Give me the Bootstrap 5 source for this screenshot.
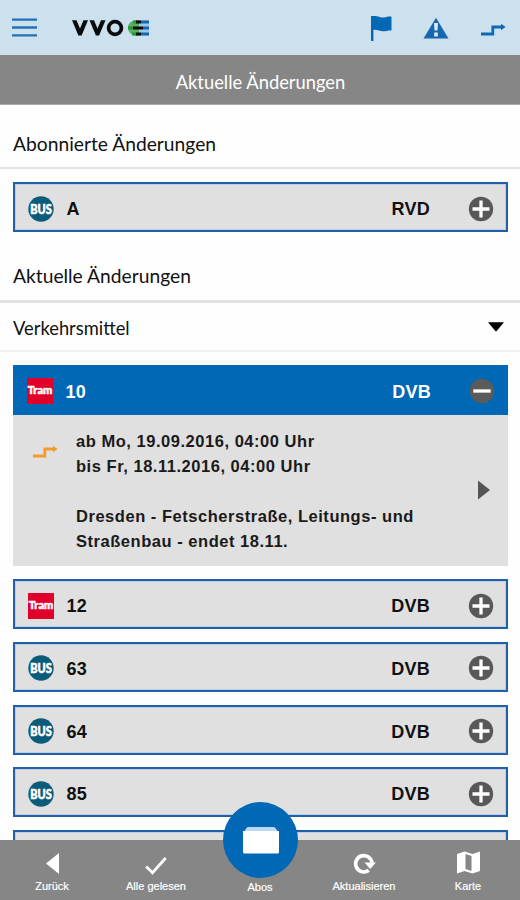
<!DOCTYPE html>
<html lang="de">
<head>
<meta charset="utf-8">
<meta name="viewport" content="width=device-width, initial-scale=1">
<title>Aktuelle Änderungen</title>
<link href="https://cdn.jsdelivr.net/npm/bootstrap@5.3.0/dist/css/bootstrap.min.css" rel="stylesheet">
<style>
  body { height: 900px; font-family: "Liberation Sans", Arial, sans-serif; color: #111; background: #fefefe; }
  svg { display: block; flex: none; }
  .screen { height: 900px; }
  .topbar { height: 55px; background: #cce0ee; padding: 0 14px 0 12px; }
  .brand-logo { margin-left: 35px; }
  .top-icons { gap: 31px; }
  .title-strip { height: 50px; background: #868686; color: #fff; border-bottom: 1px solid #a9a9a9; padding-top: 2px; }
  .futura { font-family: Lato, "Open Sans", sans-serif; font-size: 20px; line-height: 24px; white-space: nowrap; }
  .squeeze { display: inline-block; transform: scaleX(.962); transform-origin: left; }
  .squeeze-more { transform: scaleX(.917); }
  .title-strip .squeeze { transform-origin: center; }
  .section-head { padding: 0 13px; border-bottom: 2px solid #e2e2e2; }
  .head-subscribed { height: 64px; padding-top: 14px; }
  .head-current { height: 71px; padding-top: 17px; border-bottom-width: 3px; }
  .head-filter { height: 49px; padding-right: 16px; padding-top: 1px; border-color: #f0f0f0; }
  .content-scroll { height: 736px; }
  .line-list { padding: 13px 12px 0 13px; }
  .line-row { height: 50px; background: #e0e0e0; border: 2px solid #225fa9; padding: 3px 12px 0 13px; font-size: 18px; font-weight: 700; letter-spacing: .25px; margin-bottom: 12.8px; box-shadow: inset 0 0 0 1px #bdcfe3; flex: none; }
  .line-row span { padding-top: 2px; }
  .line-row .num { margin-left: 12.5px; }
  .line-row .operator { margin-right: 38px; }
  .line-open { background: #0068b4; color: #fff; border-color: #0068b4; box-shadow: none; margin-bottom: 0; padding: 2px 11px 0 12px; }
  .details { height: 151px; background: #e0e0e0; margin-bottom: 13px; padding: 14px 18px 0 19px; font-size: 16.5px; line-height: 25.1px; font-weight: 700; letter-spacing: .53px; white-space: nowrap; color: #1a1a1a; }
  .details .msg { margin-left: 18px; }
  .more-arrow { margin-top: 51px; }
  .bottombar { height: 60px; background: #868686; color: #fff; font-size: 11px; line-height: 13px; }
  .bottombar .tab { flex: 1 1 0; height: 60px; padding-bottom: 7px; -webkit-text-stroke: .2px #fff; }
  .bottombar svg { margin-bottom: 6px; }
  .tab-center { position: relative; }
  .bottombar .tab-center { padding-bottom: 6px; }
  .abo-button { position: absolute; top: -38px; left: 50%; margin-left: -37px; width: 75px; height: 76px; background: #0068b4; }
  .bottombar .abo-button svg { margin: 0; }
</style>
<script src="https://cdn.jsdelivr.net/npm/bootstrap@5.3.0/dist/js/bootstrap.bundle.min.js"></script>
</head>
<body class="overflow-hidden">
<svg width="0" height="0" class="position-absolute">
  <defs>
    <symbol id="bus" viewBox="0 0 26 26"><circle cx="13" cy="13" r="12.7" fill="#0b5c7a"/><text x="13" y="17.6" text-anchor="middle" textLength="21.5" lengthAdjust="spacingAndGlyphs" font-family="Lato, sans-serif" font-weight="900" font-size="13" letter-spacing="0" fill="#fff" stroke="#fff" stroke-width=".6">BUS</text></symbol>
    <symbol id="tram" viewBox="0 0 26 26"><rect width="26" height="26" fill="#e00029"/><text x="13" y="16.3" text-anchor="middle" textLength="24.5" lengthAdjust="spacingAndGlyphs" font-family="Lato, sans-serif" font-weight="900" font-size="11.5" letter-spacing="0" fill="#fff" stroke="#fff" stroke-width=".5">Tram</text></symbol>
    <symbol id="plus" viewBox="0 0 26 26"><circle cx="13" cy="13" r="12.2" fill="#585858"/><path d="M13 4.500v17M4.500 13h17" stroke="#fff" stroke-width="3.300"/></symbol>
    <symbol id="minus" viewBox="0 0 26 26"><circle cx="13" cy="13" r="12.200" fill="#5b5b5b"/><path d="M4.300 13h17.400" stroke="#fff" stroke-width="3.300"/></symbol>
    <symbol id="detour" viewBox="0 0 26 14"><path d="M1 11H12.800V4H22" fill="none" stroke="currentColor" stroke-width="2.800"/><path d="M21 .7L25.600 4L21 7.300z" fill="currentColor"/></symbol>
  </defs>
</svg>
<div class="screen d-flex flex-column overflow-hidden">
  <header class="topbar d-flex align-items-center flex-shrink-0">
    <svg width="25" height="19" viewBox="0 0 25 19"><path d="M0 1.700h25M0 9.500h25M0 17.300h25" stroke="#2370b8" stroke-width="2.300"/></svg>
    <svg class="brand-logo" width="78" height="20" viewBox="0 0 78 20">
      <path d="M0 2.300H4.500L8 10.500L11.500 2.300H16L9.600 17.500H6.400zM17.500 2.300H22L25.500 10.500L29 2.300H33.500L27.100 17.500H23.900z" fill="#080b0c"/>
      <circle cx="43" cy="10" r="6.400" fill="none" stroke="#080b0c" stroke-width="3.700"/>
      <path d="M69 2.300H62Q55.500 5 56 10Q56.500 15.500 62 17.500H69z" fill="#5cae60"/>
      <path d="M67 2.300H77V17.500H67z" fill="#9fc6e4"/>
      <path d="M61 4H66M56 10H62M60 16H66" stroke="#239a32" stroke-width="3"/>
      <path d="M64 4h5M61 10H71M64 16h5" stroke="#080b0c" stroke-width="3"/>
      <path d="M69 4h8M71 10h6M69 16h8" stroke="#1266b2" stroke-width="3"/>
    </svg>
    <div class="top-icons d-flex align-items-center ms-auto">
      <svg width="22" height="26" viewBox="0 0 22 26"><path d="M1 1H3.200C8 .3 10 3 14 2.500C17 2.100 19 1.200 21.500 1.700V15.600C18 15 16 16.500 12.500 16.200C8 15.800 6.500 14.300 3.400 15V26H1z" fill="#0068b4"/></svg>
      <svg width="26" height="22" viewBox="0 0 26 22"><path d="M13 .7L25.500 21.500H.5z" fill="#1767ae"/><path d="M11 6h4l-.5 7.500h-3zM11.200 15.500h3.600v4h-3.600z" fill="#dcecf6"/></svg>
      <svg class="mt-1" width="26" height="14" color="#0e68b4"><use href="#detour"/></svg>
    </div>
  </header>
  <div class="title-strip d-flex align-items-center justify-content-center flex-shrink-0 futura"><span class="squeeze squeeze-more">Aktuelle Änderungen</span></div>
  <main class="content-scroll d-flex flex-column overflow-hidden">
    <h2 class="section-head head-subscribed futura fw-normal m-0 d-flex align-items-center flex-shrink-0"><span class="squeeze">Abonnierte Änderungen</span></h2>
    <div class="line-list">
      <div class="line-row d-flex align-items-center mb-0"><svg width="26" height="26"><use href="#bus"/></svg><span class="num">A</span><span class="operator ms-auto">RVD</span><svg width="26" height="26"><use href="#plus"/></svg></div>
    </div>
    <h2 class="section-head head-current futura fw-normal m-0 d-flex align-items-center flex-shrink-0"><span class="squeeze">Aktuelle Änderungen</span></h2>
    <div class="section-head head-filter futura d-flex align-items-center justify-content-between flex-shrink-0"><span class="squeeze squeeze-more">Verkehrsmittel</span><svg width="16" height="10" viewBox="0 0 16 10"><path d="M0 .3h16L8 9.700z"/></svg></div>
    <div class="line-list d-flex flex-column flex-shrink-0">
      <div class="line-row line-open d-flex align-items-center"><svg width="26" height="26"><use href="#tram"/></svg><span class="num">10</span><span class="operator ms-auto">DVB</span><svg width="26" height="26"><use href="#minus"/></svg></div>
      <div class="details d-flex align-items-start">
        <svg class="mt-3" width="26" height="14" color="#f39a2b"><use href="#detour"/></svg>
        <div class="msg">ab Mo, 19.09.2016, 04:00 Uhr<br>bis Fr, 18.11.2016, 04:00 Uhr<br><br>Dresden - Fetscherstraße, Leitungs- und<br>Straßenbau - endet 18.11.</div>
        <svg class="more-arrow ms-auto" width="12" height="20" viewBox="0 0 12 20"><path d="M0 .5L12 10L0 19.500z" fill="#555"/></svg>
      </div>
      <div class="line-row d-flex align-items-center"><svg width="26" height="26"><use href="#tram"/></svg><span class="num">12</span><span class="operator ms-auto">DVB</span><svg width="26" height="26"><use href="#plus"/></svg></div>
      <div class="line-row d-flex align-items-center"><svg width="26" height="26"><use href="#bus"/></svg><span class="num">63</span><span class="operator ms-auto">DVB</span><svg width="26" height="26"><use href="#plus"/></svg></div>
      <div class="line-row d-flex align-items-center"><svg width="26" height="26"><use href="#bus"/></svg><span class="num">64</span><span class="operator ms-auto">DVB</span><svg width="26" height="26"><use href="#plus"/></svg></div>
      <div class="line-row d-flex align-items-center"><svg width="26" height="26"><use href="#bus"/></svg><span class="num">85</span><span class="operator ms-auto">DVB</span><svg width="26" height="26"><use href="#plus"/></svg></div>
      <div class="line-row"></div>
    </div>
  </main>
  <nav class="bottombar d-flex flex-shrink-0">
    <div class="tab d-flex flex-column align-items-center justify-content-end"><svg width="13" height="21" viewBox="0 0 13 21"><path d="M13 0V21L0 10.500z" fill="#fff"/></svg>Zurück</div>
    <div class="tab d-flex flex-column align-items-center justify-content-end"><svg class="mb-1" width="22" height="20" viewBox="0 0 22 20"><path d="M1.200 10.500L7.500 16.800L20.700 2" fill="none" stroke="#fff" stroke-width="2.800"/></svg>Alle gelesen</div>
    <div class="tab tab-center d-flex flex-column align-items-center justify-content-end"><div class="abo-button rounded-circle d-flex align-items-center justify-content-center"><svg width="36" height="28" viewBox="0 0 36 28"><path d="M1.500 5L3.500 2Q4.300 1 6 1H30Q31.700 1 32.500 2L34.500 5z" fill="#bcd9f3"/><path d="M0 5H36V26Q36 27.500 34.500 27.500H1.500Q0 27.500 0 26z" fill="#fff"/></svg></div>Abos</div>
    <div class="tab d-flex flex-column align-items-center justify-content-end"><svg width="23" height="22" viewBox="0 0 23 22"><path d="M15.800 18.300A8.200 8.200 0 1 1 19 11" fill="none" stroke="#fff" stroke-width="3.700"/><path d="M11.500 10.500H23L17.200 17z" fill="#fff"/></svg>Aktualisieren</div>
    <div class="tab d-flex flex-column align-items-center justify-content-end"><svg width="23" height="23" viewBox="0 0 23 23"><path d="M0 3L7.500 .5L15.500 3L23 .5V20L15.500 22.500L7.500 20L0 22.500z" fill="#fff"/><path d="M8.500 3L14.500 5V20L8.500 18z" fill="#868686"/></svg>Karte</div>
  </nav>
</div>
</body>
</html>
